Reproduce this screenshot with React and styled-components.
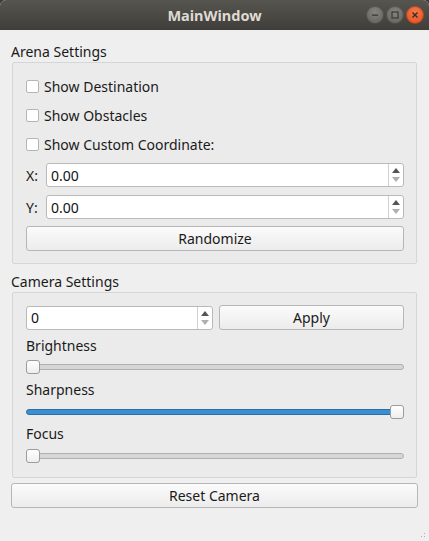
import React from "react";
import styled, { createGlobalStyle } from "styled-components";

const GlobalStyle = createGlobalStyle`
  html, body {
    margin: 0;
    padding: 0;
    background: #3c3b37;
  }
  body {
    font-family: "Noto Sans", "DejaVu Sans", sans-serif;
  }
`;

const Window = styled.div`
  width: 429px;
  height: 541px;
  display: flex;
  flex-direction: column;
  background: #efefef;
  border-radius: 6px 6px 0 0;
  overflow: hidden;
  position: relative;
`;

const TitleBar = styled.div`
  height: 30px;
  flex-shrink: 0;
  display: flex;
  align-items: center;
  justify-content: center;
  background: linear-gradient(#57554f, #3f3e3a);
  position: relative;
`;

const Title = styled.div`
  color: #dfdbd2;
  font-weight: bold;
  font-size: 14.5px;
`;

const Controls = styled.div`
  position: absolute;
  right: 5px;
  top: 6px;
  display: flex;
  gap: 2px;
`;

const Ctl = styled.div`
  width: 18px;
  height: 18px;
  border-radius: 50%;
  display: flex;
  align-items: center;
  justify-content: center;
  background: ${(p) =>
    p.close
      ? "radial-gradient(circle at 50% 35%, #f47a4c, #df4a1a)"
      : "radial-gradient(circle at 50% 35%, #86847e, #5e5c57)"};
  box-shadow: inset 0 0 0 1px rgba(0, 0, 0, 0.25);
`;

const Body = styled.div`
  flex: 1;
  display: flex;
  flex-direction: column;
  padding: 12px 11px 0 11px;
`;

const GroupTitle = styled.div`
  height: 20px;
  line-height: 20px;
  font-size: 14px;
  color: #1a1a1a;
  margin-top: ${(p) => p.mt || 0}px;
`;

const Frame = styled.div`
  margin: 0 1px;
  border: 1px solid #d6d6d6;
  border-radius: 2px;
  background: #ebebeb;
  display: flex;
  flex-direction: column;
  padding: ${(p) => p.pad};
`;

const CheckRow = styled.div`
  height: 29px;
  display: flex;
  align-items: center;
  gap: 5px;
  font-size: 14px;
  color: #1a1a1a;
`;

const Box = styled.div`
  width: 11px;
  height: 11px;
  border: 1px solid #b5b5b5;
  border-radius: 2px;
  background: #fff;
`;

const FieldRow = styled.div`
  display: flex;
  align-items: center;
  gap: 6px;
  height: ${(p) => p.h}px;
  margin-top: ${(p) => p.mt || 0}px;
`;

const FieldLabel = styled.div`
  width: 14px;
  font-size: 14px;
  color: #1a1a1a;
`;

const Spin = styled.div`
  flex: ${(p) => (p.w ? "0 0 " + p.w + "px" : "1")};
  height: ${(p) => p.h}px;
  box-sizing: border-box;
  border: 1px solid #b9b9b9;
  border-radius: 3px;
  background: #fff;
  display: flex;
  align-items: stretch;
`;

const SpinText = styled.div`
  flex: 1;
  display: flex;
  align-items: center;
  padding-left: 4px;
  font-size: 14px;
  color: #111;
`;

const Arrows = styled.div`
  width: 14px;
  border-left: 1px solid #d0d0d0;
  display: flex;
  flex-direction: column;
  align-items: center;
  justify-content: center;
  gap: 4px;
`;

const Tri = styled.div`
  width: 0;
  height: 0;
  border-left: 4px solid transparent;
  border-right: 4px solid transparent;
  ${(p) =>
    p.up
      ? "border-bottom: 5px solid #555;"
      : "border-top: 5px solid #b0b0b0;"}
`;

const Button = styled.div`
  flex: ${(p) => (p.grow ? "1" : "none")};
  height: ${(p) => p.h}px;
  box-sizing: border-box;
  border: 1px solid #b6b6b6;
  border-radius: 3px;
  background: linear-gradient(#fbfbfb, #ececec);
  display: flex;
  align-items: center;
  justify-content: center;
  font-size: 14px;
  color: #1a1a1a;
  margin-top: ${(p) => p.mt || 0}px;
`;

const SliderLabel = styled.div`
  height: 20px;
  line-height: 20px;
  font-size: 14px;
  color: #1a1a1a;
  margin-top: ${(p) => p.mt || 0}px;
`;

const SliderWrap = styled.div`
  height: 16px;
  display: flex;
  align-items: center;
  position: relative;
  margin-top: ${(p) => p.mt || 0}px;
`;

const Groove = styled.div`
  flex: 1;
  height: 4px;
  border: 1px solid;
  border-radius: 3px;
  background: ${(p) => (p.filled ? "#3a8fd2" : "#d6d6d6")};
  border-color: ${(p) => (p.filled ? "#2b6fa6" : "#b0b0b0")};
`;

const Handle = styled.div`
  position: absolute;
  top: 1px;
  width: 12px;
  height: 12px;
  border: 1px solid #9c9c9c;
  border-radius: 3px;
  background: linear-gradient(#ffffff, #eeeeee);
  ${(p) => (p.end ? "right: 0;" : "left: 0;")}
`;

const Grip = styled.div`
  position: absolute;
  right: 2px;
  bottom: 2px;
  width: 10px;
  height: 10px;
  background-image: radial-gradient(#b0b0b0 0.8px, transparent 1px);
  background-size: 3px 3px;
  clip-path: polygon(100% 0, 100% 100%, 0 100%);
`;

const SpinBox = ({ value, h, w }) => (
  <Spin h={h} w={w}>
    <SpinText>{value}</SpinText>
    <Arrows>
      <Tri up />
      <Tri />
    </Arrows>
  </Spin>
);

const Slider = ({ filled, end, mt }) => (
  <SliderWrap mt={mt}>
    <Groove filled={filled} />
    <Handle end={end} />
  </SliderWrap>
);

export default function App() {
  return (
    <Window>
      <GlobalStyle />
      <TitleBar>
        <Title>MainWindow</Title>
        <Controls>
          <Ctl>
            <svg width="10" height="10" viewBox="0 0 10 10">
              <rect x="2" y="4.5" width="6" height="1.3" fill="#3a3935" />
            </svg>
          </Ctl>
          <Ctl>
            <svg width="10" height="10" viewBox="0 0 10 10">
              <rect x="2" y="2" width="6" height="6" fill="none" stroke="#3a3935" strokeWidth="1.2" />
            </svg>
          </Ctl>
          <Ctl close>
            <svg width="10" height="10" viewBox="0 0 10 10">
              <path d="M2.5 2.5 L7.5 7.5 M7.5 2.5 L2.5 7.5" stroke="#3a2a22" strokeWidth="1.4" />
            </svg>
          </Ctl>
        </Controls>
      </TitleBar>
      <Body>
        <GroupTitle>Arena Settings</GroupTitle>
        <Frame pad="9px 12px 12px 13px">
          <CheckRow>
            <Box />
            Show Destination
          </CheckRow>
          <CheckRow>
            <Box />
            Show Obstacles
          </CheckRow>
          <CheckRow>
            <Box />
            Show Custom Coordinate:
          </CheckRow>
          <FieldRow h={24} mt={4}>
            <FieldLabel>X:</FieldLabel>
            <SpinBox value="0.00" h={24} />
          </FieldRow>
          <FieldRow h={24} mt={8}>
            <FieldLabel>Y:</FieldLabel>
            <SpinBox value="0.00" h={24} />
          </FieldRow>
          <Button h={25} mt={7}>Randomize</Button>
        </Frame>
        <GroupTitle mt={8}>Camera Settings</GroupTitle>
        <Frame pad="12px 12px 13px 13px">
          <FieldRow h={25}>
            <SpinBox value="0" h={24} w={187} />
            <Button h={25} grow>Apply</Button>
          </FieldRow>
          <SliderLabel mt={6}>Brightness</SliderLabel>
          <Slider mt={3} />
          <SliderLabel mt={5}>Sharpness</SliderLabel>
          <Slider mt={4} filled end />
          <SliderLabel mt={4}>Focus</SliderLabel>
          <Slider mt={4} />
        </Frame>
        <Button h={25} mt={5}>Reset Camera</Button>
      </Body>
      <Grip />
    </Window>
  );
}
